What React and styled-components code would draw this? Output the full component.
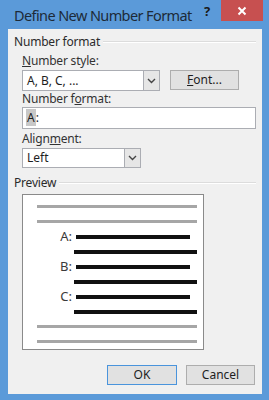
import React from "react";
import styled, { createGlobalStyle } from "styled-components";

const Global = createGlobalStyle`
  html, body { margin: 0; padding: 0; }
  body {
    width: 269px;
    height: 400px;
    overflow: hidden;
    background: #5b9ad9;
    font-family: "Noto Sans", "Open Sans", sans-serif;
  }
`;

const Window = styled.div`
  width: 269px;
  height: 400px;
  display: flex;
  flex-direction: column;
  background: #5b9ad9;
`;

const TitleBar = styled.div`
  height: 29px;
  flex: none;
  display: flex;
  align-items: flex-start;
`;

const TitleText = styled.div`
  flex: 1;
  padding-left: 14px;
  margin-top: 5px;
  font-size: 14.5px;
  letter-spacing: -0.6px;
  line-height: 20px;
  color: #1d2a38;
  white-space: nowrap;
`;

const HelpGlyph = styled.div`
  width: 14px;
  margin-top: 3px;
  margin-right: 7px;
  font-size: 13px;
  font-weight: 700;
  line-height: 16px;
  color: #1a1a1a;
  text-align: center;
`;

const CloseButton = styled.div`
  width: 42px;
  height: 21px;
  margin-right: 6px;
  background: #c75050;
  display: flex;
  align-items: center;
  justify-content: center;
`;

const Client = styled.div`
  flex: 1;
  margin: 0 7px 6px 8px;
  background: #f0f0f0;
  padding: 5px 6px 0 6px;
  display: flex;
  flex-direction: column;
`;

const GroupHeader = styled.div`
  height: 16px;
  display: flex;
  align-items: center;
  gap: 3px;
  margin-top: ${(p) => p.$mt || 0}px;
  font-size: 12px;
  letter-spacing: -0.2px;
  line-height: 16px;
  color: #2b2b2b;
`;

const GroupLine = styled.div`
  flex: 1;
  height: 0;
  border-top: 1px solid #dcdcdc;
  border-bottom: 1px solid #ffffff;
`;

const Fields = styled.div`
  padding-left: 8px;
  display: flex;
  flex-direction: column;
`;

const Label = styled.div`
  font-size: 12px;
  letter-spacing: -0.2px;
  line-height: 14px;
  height: 14px;
  color: #333333;
  margin-top: ${(p) => p.$mt || 0}px;
  u { text-decoration: underline; text-underline-offset: 1px; }
`;

const Row = styled.div`
  display: flex;
  align-items: flex-start;
  gap: 10px;
  margin-top: ${(p) => p.$mt || 0}px;
`;

const Select = styled.div`
  box-sizing: border-box;
  width: ${(p) => p.$w}px;
  height: ${(p) => p.$h}px;
  border: 1px solid #abadb3;
  background: #ffffff;
  display: flex;
  margin-top: ${(p) => p.$mt || 0}px;
`;

const SelectValue = styled.div`
  flex: 1;
  padding-left: 4px;
  font-size: 12px;
  line-height: ${(p) => p.$h - 2}px;
  color: #1e1e1e;
`;

const ArrowBox = styled.div`
  width: 15px;
  border-left: 1px solid #abadb3;
  background: #e6e6e6;
  display: flex;
  align-items: center;
  justify-content: center;
`;

const Button = styled.div`
  box-sizing: border-box;
  width: ${(p) => p.$w}px;
  height: 20px;
  border: 1px solid ${(p) => (p.$default ? "#4a94dc" : "#adadad")};
  background: #e1e1e1;
  font-size: 12px;
  line-height: 18px;
  text-align: center;
  color: #1e1e1e;
`;

const TextInput = styled.div`
  box-sizing: border-box;
  height: 22px;
  margin-top: 1px;
  border: 1px solid #abadb3;
  background: #ffffff;
  padding-left: 3px;
  font-size: 12px;
  line-height: 20px;
  color: #1e1e1e;
`;

const Selected = styled.span`
  background: #c8c8c8;
  padding: 0 1px;
`;

const PreviewBox = styled.div`
  box-sizing: border-box;
  width: 182px;
  margin: 3px 0 0 8px;
  border: 1px solid #8a8a8a;
  background: #ffffff;
  padding: 4px 0 0 0;
  display: flex;
  flex-direction: column;
`;

const PreviewRow = styled.div`
  height: 15px;
  display: flex;
  align-items: center;
  padding-left: ${(p) => p.$pl}px;
  padding-right: ${(p) => p.$pr}px;
`;

const Bar = styled.div`
  flex: 1;
  height: ${(p) => (p.$gray ? 3 : 4)}px;
  background: ${(p) => (p.$gray ? "#a6a6a6" : "#111111")};
`;

const Marker = styled.div`
  box-sizing: border-box;
  width: 39px;
  text-align: right;
  padding-right: 4px;
  font-size: 13px;
  line-height: 15px;
  color: #3a3a3a;
`;

const ButtonRow = styled.div`
  display: flex;
  justify-content: flex-end;
  gap: 9px;
  margin-top: 15px;
  padding-right: 1px;
`;

const Chevron = () => (
  <svg width="9" height="6" viewBox="0 0 9 6">
    <path d="M1 1 L4.5 4.5 L8 1" fill="none" stroke="#444" strokeWidth="1.4" />
  </svg>
);

const CloseX = () => (
  <svg width="10" height="10" viewBox="0 0 10 10">
    <path d="M1.5 1.5 L8.5 8.5 M8.5 1.5 L1.5 8.5" stroke="#fff" strokeWidth="2" />
  </svg>
);

const Gray = () => (
  <PreviewRow $pl={14} $pr={6}>
    <Bar $gray />
  </PreviewRow>
);

const Item = ({ mark }) => (
  <>
    <PreviewRow $pl={14} $pr={13}>
      <Marker>{mark}</Marker>
      <Bar />
    </PreviewRow>
    <PreviewRow $pl={51} $pr={6}>
      <Bar />
    </PreviewRow>
  </>
);

export default function App() {
  return (
    <>
      <Global />
      <Window>
        <TitleBar>
          <TitleText>Define New Number Format</TitleText>
          <HelpGlyph>?</HelpGlyph>
          <CloseButton>
            <CloseX />
          </CloseButton>
        </TitleBar>
        <Client>
          <GroupHeader>
            <span>Number format</span>
            <GroupLine />
          </GroupHeader>
          <Fields>
            <Label $mt={4}>
              <u>N</u>umber style:
            </Label>
            <Row $mt={2}>
              <Select $w={138} $h={21}>
                <SelectValue $h={21}>A, B, C, ...</SelectValue>
                <ArrowBox>
                  <Chevron />
                </ArrowBox>
              </Select>
              <Button $w={69}>
                <u>F</u>ont...
              </Button>
            </Row>
            <Label $mt={1}>
              Number f<u>o</u>rmat:
            </Label>
            <TextInput>
              <Selected>A</Selected>:
            </TextInput>
            <Label $mt={3}>
              Align<u>m</u>ent:
            </Label>
            <Select $w={119} $h={20} $mt={2}>
              <SelectValue $h={20}>Left</SelectValue>
              <ArrowBox>
                <Chevron />
              </ArrowBox>
            </Select>
          </Fields>
          <GroupHeader $mt={7}>
            <span>Preview</span>
            <GroupLine />
          </GroupHeader>
          <PreviewBox>
            <Gray />
            <Gray />
            <Item mark="A:" />
            <Item mark="B:" />
            <Item mark="C:" />
            <Gray />
            <Gray />
          </PreviewBox>
          <ButtonRow>
            <Button $w={70} $default>
              OK
            </Button>
            <Button $w={69}>Cancel</Button>
          </ButtonRow>
        </Client>
      </Window>
    </>
  );
}
